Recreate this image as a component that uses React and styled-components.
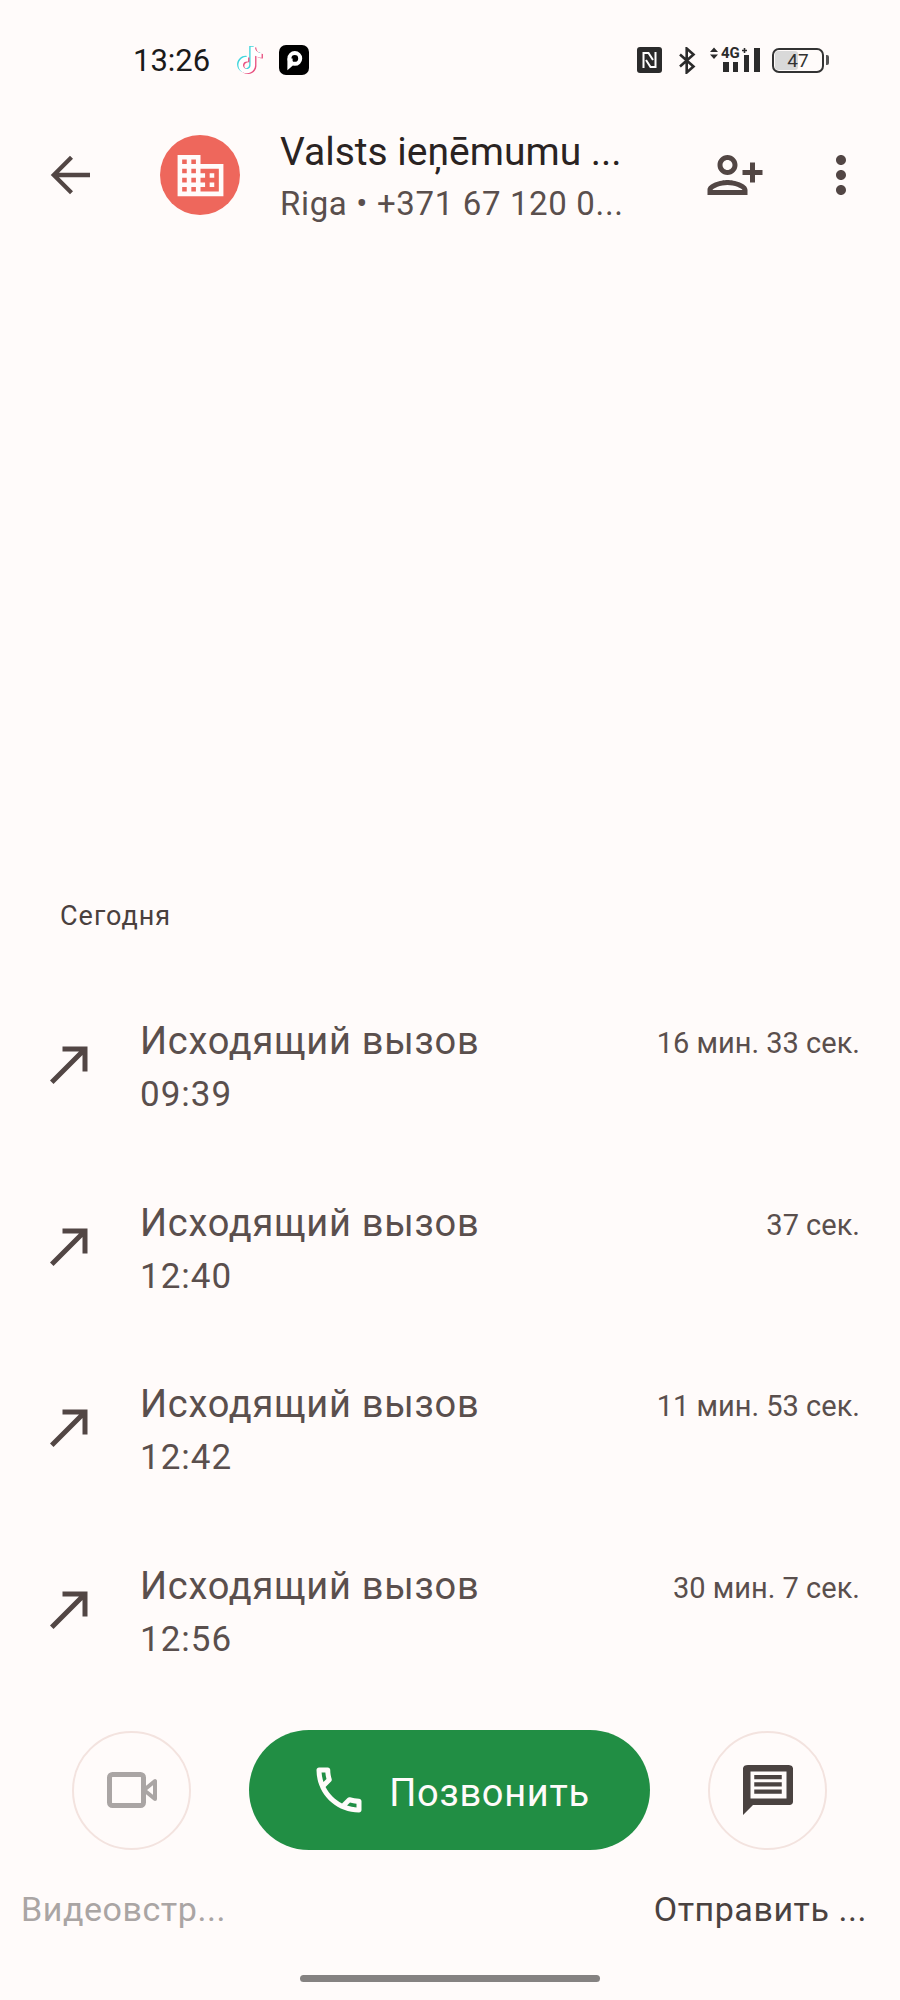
import React from 'react';
import styled, { createGlobalStyle } from 'styled-components';

const GlobalStyle = createGlobalStyle`
  html, body { margin: 0; padding: 0; background: #fffbfa; }
  body { font-family: Roboto, "Noto Sans", sans-serif; }
`;

const Screen = styled.div`
  width: 900px;
  height: 2000px;
  background: #fffbfa;
  display: flex;
  flex-direction: column;
  overflow: hidden;
`;

const StatusBar = styled.div`
  height: 120px;
  display: flex;
  align-items: center;
  justify-content: space-between;
  padding: 0 76px 0 133px;
  box-sizing: border-box;
`;

const StatusGroup = styled.div`
  display: flex;
  align-items: center;
  gap: 14px;
`;

const Clock = styled.span`
  font-size: 31px;
  color: #1a1a1a;
  margin-right: 11px;
`;

const Signal = styled.div`
  position: relative;
  width: 50px;
  height: 27px;
  svg { display: block; }
`;

const NetworkBadge = styled.span`
  position: absolute;
  left: 11px;
  top: -2px;
  font-size: 15px;
  line-height: 16px;
  font-weight: 700;
  color: #2b2b2b;
`;

const Battery = styled.div`
  position: relative;
  width: 52px;
  height: 25px;
  margin-left: -2px;
  box-sizing: border-box;
  border: 2.5px solid #333;
  border-radius: 7px;
  display: flex;
  align-items: center;
  justify-content: center;
  font-size: 19px;
  color: #333;
  &::after {
    content: '';
    position: absolute;
    right: -7px;
    top: 5px;
    width: 3px;
    height: 10px;
    background: #555;
    border-radius: 0 2px 2px 0;
  }
`;

const BatteryFill = styled.div`
  position: absolute;
  left: 1px;
  top: 1px;
  bottom: 1px;
  background: #d9d9d9;
  border-radius: 3px;
`;

const BatteryLevel = styled.span`
  position: relative;
`;

const Header = styled.div`
  height: 110px;
  display: flex;
  align-items: center;
  padding-left: 40px;
`;

const IconSlot = styled.div`
  width: ${p => p.$size || 60}px;
  height: ${p => p.$size || 60}px;
  display: flex;
  align-items: center;
  justify-content: center;
  flex-shrink: 0;
  svg { display: block; fill: ${p => p.$color || '#524644'}; }
`;

const ArrowSlot = styled(IconSlot)`
  margin-bottom: 5px;
`;

const Avatar = styled.div`
  width: 80px;
  height: 80px;
  margin-left: 60px;
  border-radius: 50%;
  background: #ee675c;
  display: flex;
  align-items: center;
  justify-content: center;
  flex-shrink: 0;
  svg { display: block; fill: #fffbfa; }
`;

const HeaderText = styled.div`
  width: 421px;
  margin-left: 40px;
  display: flex;
  flex-direction: column;
  margin-top: 6px;
`;

const Title = styled.div`
  font-size: 39px;
  line-height: 52px;
  color: #2a2322;
`;

const Subtitle = styled.div`
  font-size: 33px;
  line-height: 52px;
  letter-spacing: 0.65px;
  color: #5a4f4d;
`;

const HeaderActions = styled.div`
  display: flex;
  align-items: center;
  margin-left: 4px;
  gap: 46px;
`;

const History = styled.div`
  flex: 1;
  display: flex;
  flex-direction: column;
  justify-content: flex-end;
`;

const DayLabel = styled.div`
  font-size: 27px;
  line-height: 32px;
  letter-spacing: 1px;
  color: #4a403e;
  padding: 0 0 44px 60px;
`;

const CallRow = styled.div`
  height: 181.5px;
  display: flex;
  align-items: center;
  padding: 0 40px;
  box-sizing: border-box;
`;

const CallBody = styled.div`
  flex: 1;
  margin-left: 40px;
  margin-top: 3px;
`;

const CallTitle = styled.div`
  font-size: 38px;
  line-height: 54px;
  letter-spacing: 0.75px;
  color: #5a4f4d;
`;

const CallTime = styled.div`
  font-size: 35px;
  line-height: 54px;
  letter-spacing: 1px;
  color: #5a4f4d;
`;

const CallDuration = styled.div`
  align-self: flex-start;
  margin-top: 47px;
  font-size: 29px;
  line-height: 40px;
  color: #5a4f4d;
`;

const Actions = styled.div`
  display: flex;
  align-items: center;
  gap: 58px;
  padding: 28px 0 0 72px;
`;

const RoundButton = styled.div`
  width: 119px;
  height: 119px;
  box-sizing: border-box;
  border: 2px solid #f3e3df;
  border-radius: 50%;
  display: flex;
  align-items: center;
  justify-content: center;
`;

const CallButton = styled.div`
  width: 401px;
  height: 120px;
  border-radius: 60px;
  background: #218e44;
  color: #fffbfa;
  display: flex;
  align-items: center;
  justify-content: center;
  gap: 20px;
  font-size: 38px;
  letter-spacing: 0.7px;
`;

const CallLabel = styled.span`
  padding-top: 5px;
`;

const Labels = styled.div`
  display: flex;
  justify-content: space-between;
  padding: 40px 33px 0 21px;
`;

const ActionLabel = styled.div`
  font-size: 34px;
  line-height: 38px;
  letter-spacing: 0.55px;
  color: ${p => (p.$disabled ? '#aaa5a4' : '#4a4240')};
`;

const HomeBarWrap = styled.div`
  height: 72px;
  display: flex;
  justify-content: center;
  padding-top: 47px;
  box-sizing: border-box;
`;

const HomeBar = styled.div`
  width: 300px;
  height: 7px;
  border-radius: 4px;
  background: #858281;
`;

const tiktokPath = 'M12.525.02c1.31-.02 2.61-.01 3.91-.02.08 1.53.63 3.09 1.75 4.17 1.12 1.11 2.7 1.62 4.24 1.79v4.03c-1.44-.05-2.89-.35-4.2-.97-.57-.26-1.1-.59-1.62-.93-.01 2.92.01 5.84-.02 8.75-.08 1.4-.54 2.79-1.35 3.94-1.31 1.92-3.58 3.17-5.91 3.21-1.43.08-2.86-.31-4.08-1.03-2.02-1.19-3.44-3.37-3.65-5.71-.02-.5-.03-1-.01-1.49.18-1.9 1.12-3.72 2.58-4.96 1.66-1.44 3.98-2.13 6.15-1.72.02 1.48-.04 2.96-.04 4.44-.99-.32-2.15-.23-3.02.37-.63.41-1.11 1.04-1.36 1.75-.21.51-.15 1.07-.14 1.61.24 1.64 1.82 3.02 3.5 2.87 1.12-.01 2.19-.66 2.77-1.61.19-.33.4-.67.41-1.06.1-1.79.06-3.57.07-5.36.01-4.03-.01-8.05.02-12.07z';

function TikTokIcon() {
  return (
    <svg width="30" height="32" viewBox="-1.5 -1 27 26">
      <path d={tiktokPath} fill="#3fd5dc" transform="translate(-1.2 -.7)" />
      <path d={tiktokPath} fill="#e8507f" transform="translate(1.2 .7)" />
      <path d={tiktokPath} fill="#ffffff" />
    </svg>
  );
}

function ParkingIcon() {
  return (
    <svg width="30" height="30" viewBox="0 0 30 30">
      <rect width="30" height="30" rx="7" fill="#000" />
      <circle cx="15.8" cy="13.4" r="5.4" fill="none" stroke="#fff" strokeWidth="4" />
      <path d="M8.4 13.4v11.8l5.2-4.4V13.4z" fill="#fff" />
    </svg>
  );
}

function NfcIcon() {
  return (
    <svg width="25" height="26" viewBox="0 0 25 26">
      <rect width="25" height="26" rx="3" fill="#2b2b2b" />
      <path d="M6.5 21V6h5L16 13M18.5 5v15h-5L9 13" fill="none" stroke="#fff" strokeWidth="2" />
    </svg>
  );
}

function BluetoothIcon() {
  return (
    <svg width="20" height="27" viewBox="-2 0 20 27">
      <path d="M2 7.5l13.5 12L8.7 25.5V1.5l6.8 6L2 19.5" fill="none" stroke="#2b2b2b" strokeWidth="2.6" />
    </svg>
  );
}

function SignalBars() {
  return (
    <svg width="50" height="27" viewBox="0 0 50 27">
      <path d="M0 5L4 0.5 8 5zM0 7.5h8L4 12z" fill="#2b2b2b" />
      <path d="M32 3.5h5M34.5 1v5" stroke="#2b2b2b" strokeWidth="1.6" />
      <rect x="13" y="15" width="6" height="10" fill="#2b2b2b" />
      <rect x="23" y="15" width="5" height="10" fill="#2b2b2b" />
      <rect x="34" y="8" width="5" height="17" fill="#2b2b2b" />
      <rect x="44" y="1" width="6" height="24" fill="#2b2b2b" />
    </svg>
  );
}

function BackIcon() {
  return (
    <svg width="60" height="60" viewBox="0 0 24 24">
      <path d="M20 11.1H7.6l5.6-5.6L12 4.3 4.3 12l7.7 7.7 1.2-1.2-5.6-5.6H20z" />
    </svg>
  );
}

function BusinessIcon() {
  return (
    <svg width="55" height="55" viewBox="0 0 24 24">
      <path d="M12 7V3H2v18h20V7H12zM6 19H4v-2h2v2zm0-4H4v-2h2v2zm0-4H4V9h2v2zm0-4H4V5h2v2zm4 12H8v-2h2v2zm0-4H8v-2h2v2zm0-4H8V9h2v2zm0-4H8V5h2v2zm10 12h-8v-2h2v-2h-2v-2h2v-2h-2V9h8v10zm-2-8h-2v2h2v-2zm0 4h-2v2h2v-2z" />
    </svg>
  );
}

function PersonAddIcon() {
  return (
    <svg width="60" height="60" viewBox="0 0 24 24" style={{ transform: 'scaleX(-1)' }}>
      <path d="M15 12c2.21 0 4-1.79 4-4s-1.79-4-4-4-4 1.79-4 4 1.79 4 4 4zm0-6c1.1 0 2 .9 2 2s-.9 2-2 2-2-.9-2-2 .9-2 2-2zm0 8c-2.67 0-8 1.34-8 4v2h16v-2c0-2.66-5.33-4-8-4zm-6 4c.22-.72 3.31-2 6-2 2.7 0 5.8 1.29 6 2H9zm-3-3v-3h3v-2H6V7H4v3H1v2h3v3h2z" />
    </svg>
  );
}

function MoreIcon() {
  return (
    <svg width="60" height="60" viewBox="0 0 24 24">
      <path d="M12 8c1.1 0 2-.9 2-2s-.9-2-2-2-2 .9-2 2 .9 2 2 2zm0 2c-1.1 0-2 .9-2 2s.9 2 2 2 2-.9 2-2-.9-2-2-2zm0 6c-1.1 0-2 .9-2 2s.9 2 2 2 2-.9 2-2-.9-2-2-2z" />
    </svg>
  );
}

function OutgoingIcon() {
  return (
    <svg width="60" height="60" viewBox="0 0 24 24">
      <path d="M9 5v2h6.59L4 18.59 5.41 20 17 8.41V15h2V5z" />
    </svg>
  );
}

function VideoIcon() {
  return (
    <svg width="58" height="58" viewBox="0 0 58 58">
      <rect x="6.5" y="13.5" width="34" height="31" rx="3" stroke="#aaa5a4" style={{ fill: 'none' }} strokeWidth="5" />
      <path d="M41 29l11-9v18z" stroke="#aaa5a4" strokeWidth="4" strokeLinejoin="round" style={{ fill: 'none' }} />
    </svg>
  );
}

function PhoneIcon() {
  return (
    <svg width="60" height="60" viewBox="0 0 24 24">
      <path d="M6.54 5c.06.89.21 1.76.45 2.59l-1.2 1.2c-.41-1.2-.67-2.47-.76-3.79h1.51m9.86 12.02c.85.24 1.72.39 2.6.45v1.49c-1.32-.09-2.59-.35-3.8-.75l1.2-1.19M7.5 3H4c-.55 0-1 .45-1 1 0 9.39 7.61 17 17 17 .55 0 1-.45 1-1v-3.49c0-.55-.45-1-1-1-1.24 0-2.45-.2-3.57-.57-.1-.04-.21-.05-.31-.05-.26 0-.51.1-.71.29l-2.2 2.2c-2.83-1.45-5.15-3.76-6.59-6.59l2.2-2.2c.28-.28.36-.67.25-1.02C8.7 6.45 8.5 5.25 8.5 4c0-.55-.45-1-1-1z" />
    </svg>
  );
}

function MessageIcon() {
  return (
    <svg width="60" height="60" viewBox="0 0 24 24">
      <path
        fillRule="evenodd"
        d="M20 2H4c-1.1 0-2 .4-2 1.4V22l4-4h14.6c.9 0 1.4-.5 1.4-1.4V3.4C22 2.4 21 2 20 2zM5 4.6h14.4v10.8H5z"
      />
      <path d="M6.5 6h11v1.7h-11zM6.5 8.9h11v1.7h-11zM6.5 11.8h11v1.7h-11z" />
    </svg>
  );
}

const calls = [
  { time: '09:39', duration: '16 мин. 33 сек.' },
  { time: '12:40', duration: '37 сек.' },
  { time: '12:42', duration: '11 мин. 53 сек.' },
  { time: '12:56', duration: '30 мин. 7 сек.' },
];

export default function App() {
  return (
    <Screen>
      <GlobalStyle />
      <StatusBar>
        <StatusGroup>
          <Clock>13:26</Clock>
          <TikTokIcon />
          <ParkingIcon />
        </StatusGroup>
        <StatusGroup>
          <NfcIcon />
          <BluetoothIcon />
          <Signal>
            <SignalBars />
            <NetworkBadge>4G</NetworkBadge>
          </Signal>
          <Battery>
            <BatteryFill style={{ width: '47%' }} />
            <BatteryLevel>47</BatteryLevel>
          </Battery>
        </StatusGroup>
      </StatusBar>

      <Header>
        <IconSlot><BackIcon /></IconSlot>
        <Avatar><BusinessIcon /></Avatar>
        <HeaderText>
          <Title>Valsts ieņēmumu ...</Title>
          <Subtitle>Riga • +371 67 120 0...</Subtitle>
        </HeaderText>
        <HeaderActions>
          <IconSlot><PersonAddIcon /></IconSlot>
          <IconSlot><MoreIcon /></IconSlot>
        </HeaderActions>
      </Header>

      <History>
        <DayLabel>Сегодня</DayLabel>
        {calls.map(call => (
          <CallRow key={call.time}>
            <ArrowSlot><OutgoingIcon /></ArrowSlot>
            <CallBody>
              <CallTitle>Исходящий вызов</CallTitle>
              <CallTime>{call.time}</CallTime>
            </CallBody>
            <CallDuration>{call.duration}</CallDuration>
          </CallRow>
        ))}
      </History>

      <Actions>
        <RoundButton><IconSlot $size={58}><VideoIcon /></IconSlot></RoundButton>
        <CallButton>
          <IconSlot $color="#fffbfa"><PhoneIcon /></IconSlot>
          <CallLabel>Позвонить</CallLabel>
        </CallButton>
        <RoundButton><IconSlot $color="#4a4240"><MessageIcon /></IconSlot></RoundButton>
      </Actions>
      <Labels>
        <ActionLabel $disabled>Видеовстр...</ActionLabel>
        <ActionLabel>Отправить ...</ActionLabel>
      </Labels>
      <HomeBarWrap><HomeBar /></HomeBarWrap>
    </Screen>
  );
}
